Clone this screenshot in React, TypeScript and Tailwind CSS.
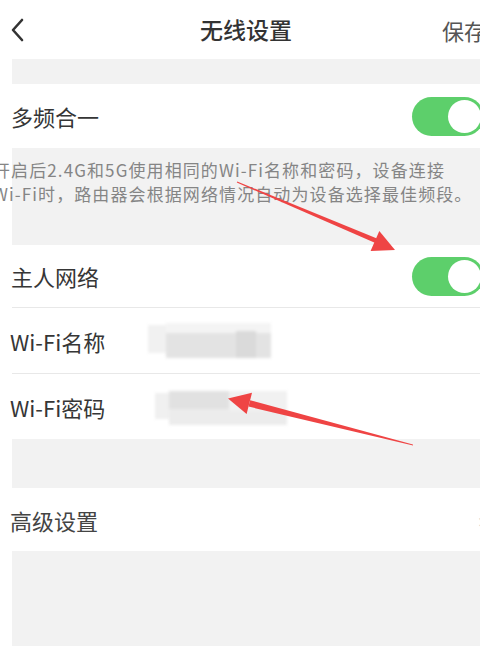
import React from "react";

function Toggle() {
  return (
    <div className="relative w-[72px] h-[39px] rounded-full bg-[#5dcf6b] mr-[-4px] shrink-0">
      <div className="absolute right-[3px] top-[3px] w-[33px] h-[33px] rounded-full bg-white" />
    </div>
  );
}

export default function App() {
  return (
    <div className="relative w-[480px] h-[649px] overflow-hidden bg-white text-[#363636] font-['Noto_Sans_CJK_SC','Noto_Sans',sans-serif]">
      {/* header */}
      <div className="h-[59px] flex items-center">
        <div className="w-[60px] pl-[10px] flex items-center">
          <svg width="14" height="24" viewBox="0 0 14 24" fill="none">
            <path d="M12 2 L3 12 L12 22" stroke="#333" strokeWidth="2.6" strokeLinecap="round" strokeLinejoin="round" />
          </svg>
        </div>
        <div className="flex-1 text-center text-[23px] font-medium text-[#333] leading-none">无线设置</div>
        <div className="w-[48px] pl-[10px] whitespace-nowrap text-[22px] text-[#555] leading-none">保存</div>
      </div>

      <div className="ml-[12px] flex flex-col">
        <div className="h-[25px] bg-[#f2f2f2]" />
        <div className="h-[64px] flex items-center justify-between">
          <span className="text-[22px] leading-none ml-[-1px]">多频合一</span>
          <Toggle />
        </div>
        <div className="h-[97px] bg-[#f2f2f2] pt-[10px]">
          <p className="ml-[-19px] text-[17px] leading-[24px] text-[#858585] whitespace-nowrap tracking-[1.1px]">
            开启后2.4G和5G使用相同的Wi-Fi名称和密码，设备连接
            <br />
            Wi-Fi时，路由器会根据网络情况自动为设备选择最佳频段。
          </p>
        </div>
        <div className="h-[63px] flex items-center justify-between border-b border-[#e8e8e8]">
          <span className="text-[22px] leading-none ml-[-1px]">主人网络</span>
          <Toggle />
        </div>
        <div className="h-[66px] flex items-center border-b border-[#e8e8e8]">
          <span className="w-[138px] text-[22px] leading-none ml-[-2px] whitespace-nowrap">Wi-Fi名称</span>
          <div className="relative w-[125px] h-[36px] blur-[1.5px]">
            <div className="absolute left-0 top-[2px] w-[20px] h-[28px] bg-[#f1f1f1]" />
            <div className="absolute left-[18px] top-0 w-[105px] h-[10px] bg-[#f4f4f4]" />
            <div className="absolute left-[18px] top-[10px] w-[105px] h-[25px] bg-[#e3e3e3]" />
            <div className="absolute left-[88px] top-[8px] w-[20px] h-[27px] bg-[#dadada]" />
          </div>
        </div>
        <div className="h-[65px] flex items-center">
          <span className="w-[145px] text-[22px] leading-none ml-[-2px] whitespace-nowrap">Wi-Fi密码</span>
          <div className="relative w-[135px] h-[36px] blur-[1.5px]">
            <div className="absolute left-0 top-[4px] w-[16px] h-[26px] bg-[#f0f0f0]" />
            <div className="absolute left-[14px] top-[2px] w-[60px] h-[22px] bg-[#e1e1e1]" />
            <div className="absolute left-[14px] top-[20px] w-[118px] h-[16px] bg-[#ececec]" />
            <div className="absolute left-[74px] top-[2px] w-[58px] h-[20px] bg-[#f1f1f1]" />
          </div>
        </div>
        <div className="h-[49px] bg-[#f2f2f2]" />
        <div className="h-[63px] flex items-center justify-between">
          <span className="text-[22px] leading-none ml-[-2px] text-[#444]">高级设置</span>
          <span className="text-[20px] text-[#ccc] mr-[-4px]">›</span>
        </div>
        <div className="h-[95px] bg-[#f2f2f2]" />
      </div>

      {/* red arrows overlay */}
      <svg className="absolute inset-0 pointer-events-none" width="480" height="649" viewBox="0 0 480 649">
        <g fill="#ef4444">
          <polygon points="237.2,181.5 236.8,182.5 378.2,244.2 376.4,238.2" />
          <polygon points="395,250 370.6,251 379.3,231" />
          <polygon points="413.1,445.5 412.9,444.5 250.1,400.2 248.5,406.6" />
          <polygon points="228,398.5 252,392.7 246.6,414" />
        </g>
      </svg>
    </div>
  );
}
